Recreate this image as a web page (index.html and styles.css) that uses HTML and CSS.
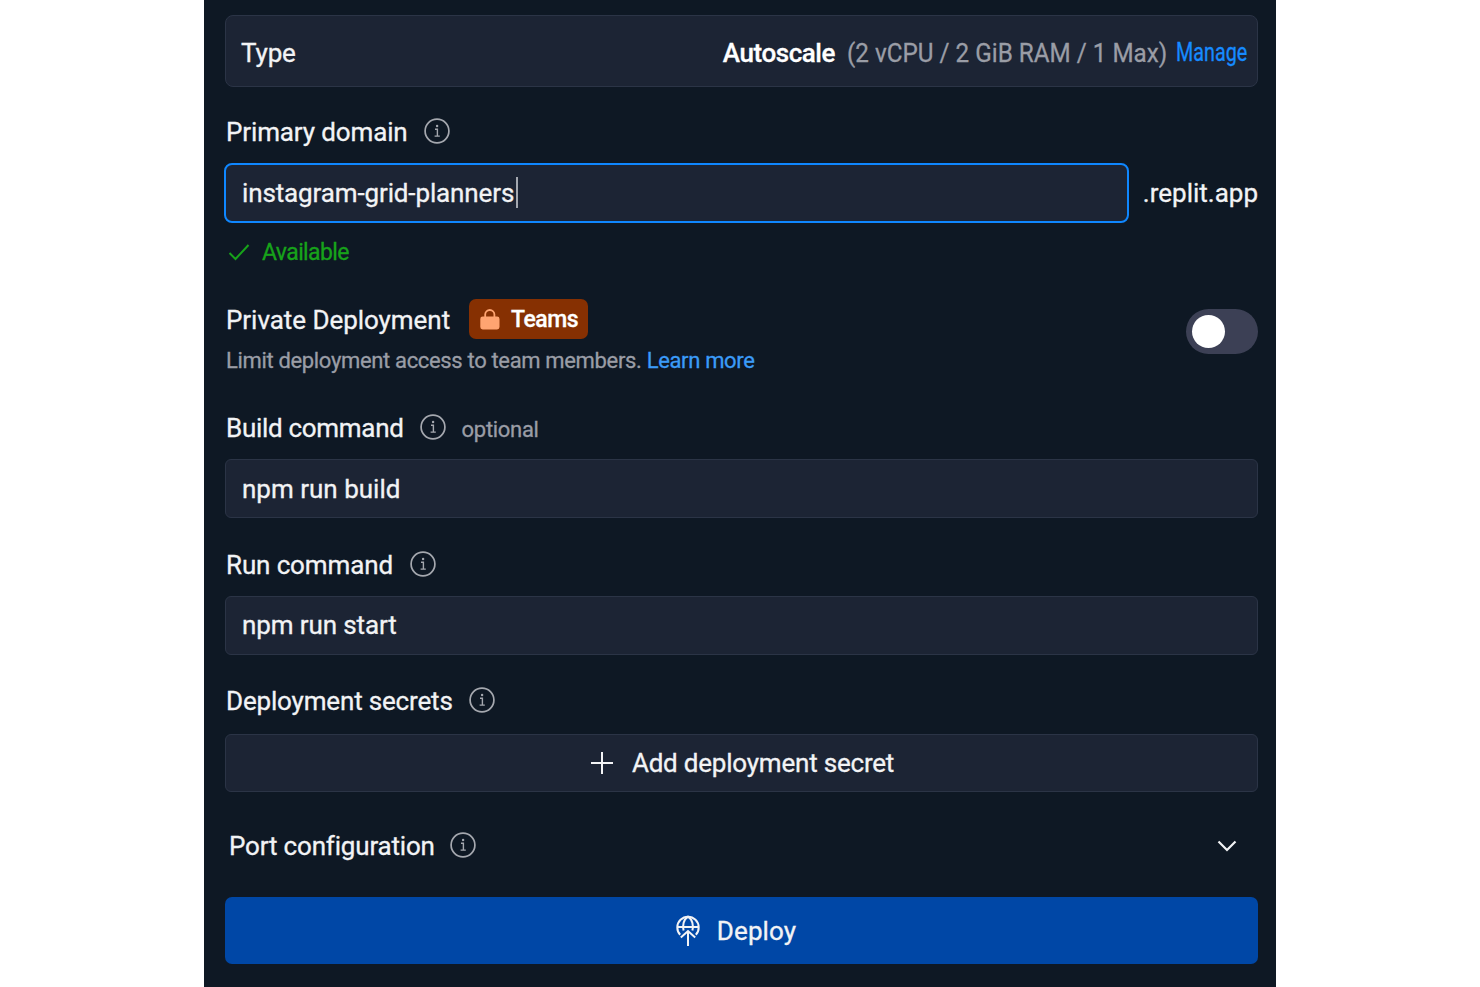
FILE: index.html
```
<!DOCTYPE html>
<html lang="en">
<head>
    <meta charset="UTF-8">
    <meta name="viewport" content="width=device-width, initial-scale=1.0">
    <title>Deploy</title>
    <link rel="stylesheet" href="styles.css">
</head>
<body>
    <svg class="sprite" width="0" height="0">
        <symbol id="icon-info" viewBox="0 0 26 26">
            <circle cx="13" cy="13" r="11.9" stroke-width="1.7"/>
            <path d="M11 11.3h2.4v6.8M10.6 18.1h5.2" stroke-width="1.4"/>
            <circle cx="13.1" cy="8" r="1.2" fill="currentColor" stroke="none"/>
        </symbol>
    </svg>
    <main class="panel">
        <section class="type-box">
            <span class="type-name">Type</span>
            <span class="type-plan">Autoscale</span>
            <span class="type-specs">(2 vCPU / 2 GiB RAM / 1 Max)</span>
            <a href="#" class="manage">Manage</a>
        </section>

        <div class="label-row domain-label">
            <label>Primary domain</label>
            <svg class="info"><use href="#icon-info"/></svg>
        </div>
        <div class="domain-row">
            <div class="field focused"><span class="domain">instagram-grid-planners</span><span class="caret"></span></div>
            <span class="suffix">.replit.app</span>
        </div>
        <div class="status">
            <svg class="check" viewBox="0 0 22 18"><path d="M1.5 10l6 6L20.5 2"/></svg>
            <span>Available</span>
        </div>

        <section class="private">
            <div>
                <div class="private-title">
                    <span class="private-name">Private Deployment</span>
                    <span class="badge">
                        <svg class="lock" viewBox="0 0 20 21">
                            <path d="M5.2 8V5.6a4.6 4.6 0 0 1 9.2 0V8" fill="none" stroke="currentColor" stroke-width="1.8"/>
                            <rect x="0.3" y="7.5" width="19.2" height="13" rx="2.4" fill="currentColor" stroke="none"/>
                        </svg>
                        <span>Teams</span>
                    </span>
                </div>
                <p class="hint"><span>Limit deployment access to team members.</span> <a href="#">Learn more</a></p>
            </div>
            <div class="toggle"><div class="knob"></div></div>
        </section>

        <div class="label-row build-label">
            <label>Build command</label>
            <svg class="info"><use href="#icon-info"/></svg>
            <span class="optional">optional</span>
        </div>
        <div class="field"><span>npm run build</span></div>

        <div class="label-row run-label">
            <label>Run command</label>
            <svg class="info"><use href="#icon-info"/></svg>
        </div>
        <div class="field"><span class="run-value">npm run start</span></div>

        <div class="label-row secrets-label">
            <label>Deployment secrets</label>
            <svg class="info"><use href="#icon-info"/></svg>
        </div>
        <button class="add-secret">
            <svg class="plus" viewBox="0 0 24 24"><path d="M12 1v22M1 12h22"/></svg>
            <span>Add deployment secret</span>
        </button>

        <div class="label-row port-row">
            <label>Port configuration</label>
            <svg class="info"><use href="#icon-info"/></svg>
            <svg class="chevron" viewBox="0 0 20 12"><path d="M1.5 1.5L10 10l8.500-8.500"/></svg>
        </div>
        <button class="deploy">
            <svg class="globe" viewBox="0 0 24 32">
                <path d="M4.200 19.800A10.700 10.700 0 1 1 19.800 19.800"/>
                <path d="M1.500 12h21"/>
                <path d="M7.600 15.500C6.300 10.500 7.500 4.500 12 1.600c4.500 2.900 5.700 8.900 4.400 13.900"/>
                <path d="M12 31V16M4.800 22.500L12 16l7.200 6.500"/>
            </svg>
            <span>Deploy</span>
        </button>
    </main>
</body>
</html>
```

FILE: styles.css
```
* {
    box-sizing: border-box;
}

body {
    margin: 0;
    background-color: #fff;
    font-family: Roboto, "Liberation Sans", sans-serif;
    font-size: 26px;
    line-height: 32px;
    letter-spacing: -0.13px;
    color: #f2f3f5;
    -webkit-text-stroke: 0.3px;
}

.sprite {
    position: absolute;
}

svg {
    flex-shrink: 0;
    fill: none;
    stroke: currentColor;
}

a {
    color: #3b9bf8;
    text-decoration: none;
}

.panel {
    width: 1072px;
    height: 987px;
    margin: 0 auto;
    padding: 15px 18px 0 21px;
    background-color: #0e1824;
    overflow: hidden;
}

.type-box {
    display: flex;
    align-items: center;
    height: 72px;
    padding: 3px 10px 0 15px;
    border: 1px solid #2b3446;
    border-radius: 8px;
    background-color: #1c2434;
    white-space: nowrap;
}

.type-name {
    margin-right: auto;
}

.type-plan {
    font-weight: 500;
    letter-spacing: -0.45px;
    color: #fff;
}

.type-specs {
    width: 320px;
    margin: 0 9px 0 12px;
    letter-spacing: 0;
    color: #9a9da6;
    transform: scaleX(0.933);
    transform-origin: left;
}

.manage {
    width: 71px;
    font-size: 25px;
    letter-spacing: 0;
    color: #168bff;
    transform: scaleX(0.79);
    transform-origin: left;
}

.label-row {
    display: flex;
    align-items: center;
    height: 32px;
    padding-left: 1px;
}

.info {
    width: 26px;
    height: 26px;
    margin: -2px 0 0 16px;
    color: #a5a8af;
}

.domain-label {
    margin: 29px 0 15px;
}

.domain-row {
    display: flex;
    align-items: center;
    justify-content: space-between;
    margin-left: -1px;
}

.field {
    display: flex;
    align-items: center;
    height: 59px;
    padding: 0 16px;
    border: 1px solid #2b3446;
    border-radius: 6px;
    background-color: #1c2434;
    letter-spacing: 0;
}

.field.focused {
    width: 905px;
    height: 60px;
    border: 2px solid #0f87ff;
    border-radius: 8px;
    letter-spacing: -0.13px;
}

.suffix {
    letter-spacing: 0;
}

.run-value {
    letter-spacing: -0.12px;
    margin-top: -1px;
}

.caret {
    width: 2px;
    height: 31px;
    margin: -2px 0 0 2px;
    background-color: #a4a8b0;
}

.status {
    display: flex;
    align-items: center;
    gap: 12px;
    margin: 13px 0 0 3px;
    font-size: 23px;
    letter-spacing: -0.6px;
    color: #17a31a;
}

.status span {
    padding-top: 2px;
    line-height: 30px;
}

.check {
    width: 22px;
    height: 18px;
    stroke-width: 2;
}

.private {
    display: flex;
    justify-content: space-between;
    margin-top: 31px;
}

.private-title {
    display: flex;
    align-items: center;
    height: 40px;
    padding-left: 1px;
}

.private-name {
    width: 224px;
    margin-top: 2px;
    letter-spacing: -0.05px;
    white-space: nowrap;
}

.badge {
    display: flex;
    align-items: center;
    gap: 12px;
    width: 119px;
    height: 40px;
    margin-left: 19px;
    padding-left: 11px;
    border-radius: 7px;
    background-color: #863002;
    font-size: 23px;
    font-weight: 500;
    letter-spacing: -0.5px;
    color: #fff;
}

.badge span {
    margin: 2px 0 0 -1px;
}

.lock {
    width: 20px;
    height: 21px;
    color: #ffa471;
}

.hint {
    margin: 7px 0 -1px 1px;
    font-size: 22px;
    line-height: 30px;
    letter-spacing: -0.34px;
    color: #9a9da6;
}

.toggle {
    width: 72px;
    height: 45px;
    margin-top: 10px;
    padding: 6px;
    border-radius: 23px;
    background-color: #3c4055;
}

.knob {
    width: 33px;
    height: 33px;
    border-radius: 50%;
    background-color: #fff;
}

.build-label {
    margin: 37px 0 15px;
    letter-spacing: -0.3px;
}

.optional {
    margin: 4px 0 0 16px;
    font-size: 22px;
    color: #9a9da6;
}

.run-label {
    margin: 31px 0 15px;
}

.run-label .info {
    margin-left: 17px;
}

.secrets-label {
    margin: 30px 0 17px;
    letter-spacing: -0.17px;
}

button {
    display: flex;
    align-items: center;
    justify-content: center;
    width: 100%;
    padding: 0;
    font: inherit;
    letter-spacing: inherit;
    color: inherit;
}

.add-secret {
    gap: 18px;
    height: 58px;
    padding-left: 1px;
    border: 1px solid #2b3446;
    border-radius: 6px;
    background-color: #1c2434;
    letter-spacing: -0.21px;
}

.plus {
    width: 24px;
    height: 24px;
    stroke-width: 2;
}

.port-row {
    margin: 38px 0 35px;
    padding-left: 4px;
    letter-spacing: -0.18px;
}

.port-row .info {
    margin-left: 15px;
}

.chevron {
    width: 20px;
    height: 12px;
    margin: 0 21px 0 auto;
    stroke-width: 2.2;
}

.deploy {
    gap: 17px;
    height: 67px;
    padding-right: 11px;
    border: none;
    border-radius: 7px;
    background-color: #0047a6;
    letter-spacing: 0.1px;
}

.globe {
    width: 24px;
    height: 32px;
    stroke-width: 2;
}
```
